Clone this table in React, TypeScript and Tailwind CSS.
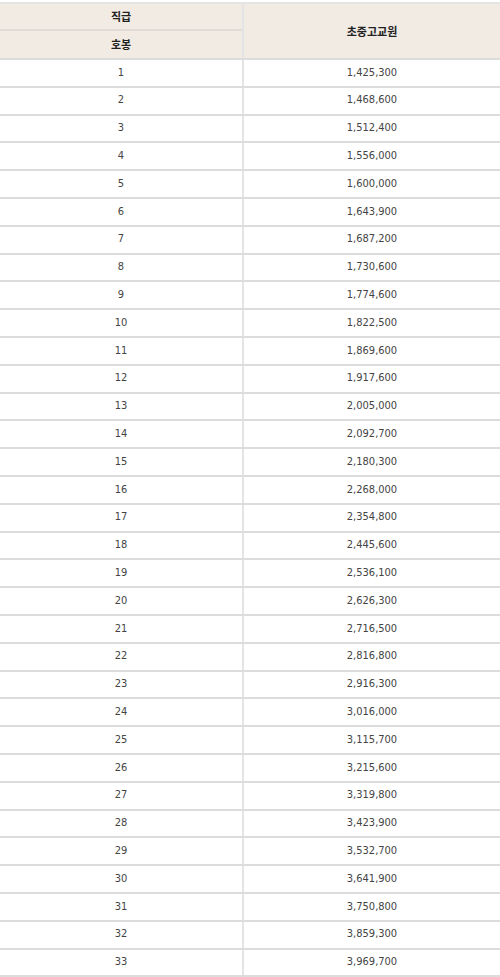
import React from "react";

const pay = [
  "1,425,300", "1,468,600", "1,512,400", "1,556,000", "1,600,000", "1,643,900",
  "1,687,200", "1,730,600", "1,774,600", "1,822,500", "1,869,600", "1,917,600",
  "2,005,000", "2,092,700", "2,180,300", "2,268,000", "2,354,800", "2,445,600",
  "2,536,100", "2,626,300", "2,716,500", "2,816,800", "2,916,300", "3,016,000",
  "3,115,700", "3,215,600", "3,319,800", "3,423,900", "3,532,700", "3,641,900",
  "3,750,800", "3,859,300", "3,969,700",
];

export default function App() {
  return (
    <div className="w-[500px] h-[977px] bg-white pt-[2px] overflow-hidden text-[#444] text-[11px]" style={{ fontFamily: '"Noto Sans CJK KR", "DejaVu Sans", sans-serif' }}>
      <div className="flex border-t-2 border-[#e4e4e4] bg-[#f1ebe3] font-bold text-[#222]">
        <div className="w-[242px] flex flex-col">
          <div className="h-[27px] flex items-center justify-center border-b-2 border-[#e0dbd4]">직급</div>
          <div className="h-[27px] flex items-center justify-center">호봉</div>
        </div>
        <div className="flex-1 flex items-center justify-center border-l-2 border-[#e4e4e4]">초중고교원</div>
      </div>
      {pay.map((p, i) => (
        <div key={i} className="flex h-[27.8px] border-t-2 border-[#dcdcdc]" style={{ fontFamily: '"Liberation Sans Narrow", "DejaVu Sans Condensed", sans-serif' }}>
          <div className="w-[242px] flex items-center justify-center">{i + 1}</div>
          <div className="flex-1 flex items-center justify-center border-l-2 border-[#e4e4e4]">{p}</div>
        </div>
      ))}
      <div className="border-t-2 border-[#dcdcdc]" />
    </div>
  );
}
